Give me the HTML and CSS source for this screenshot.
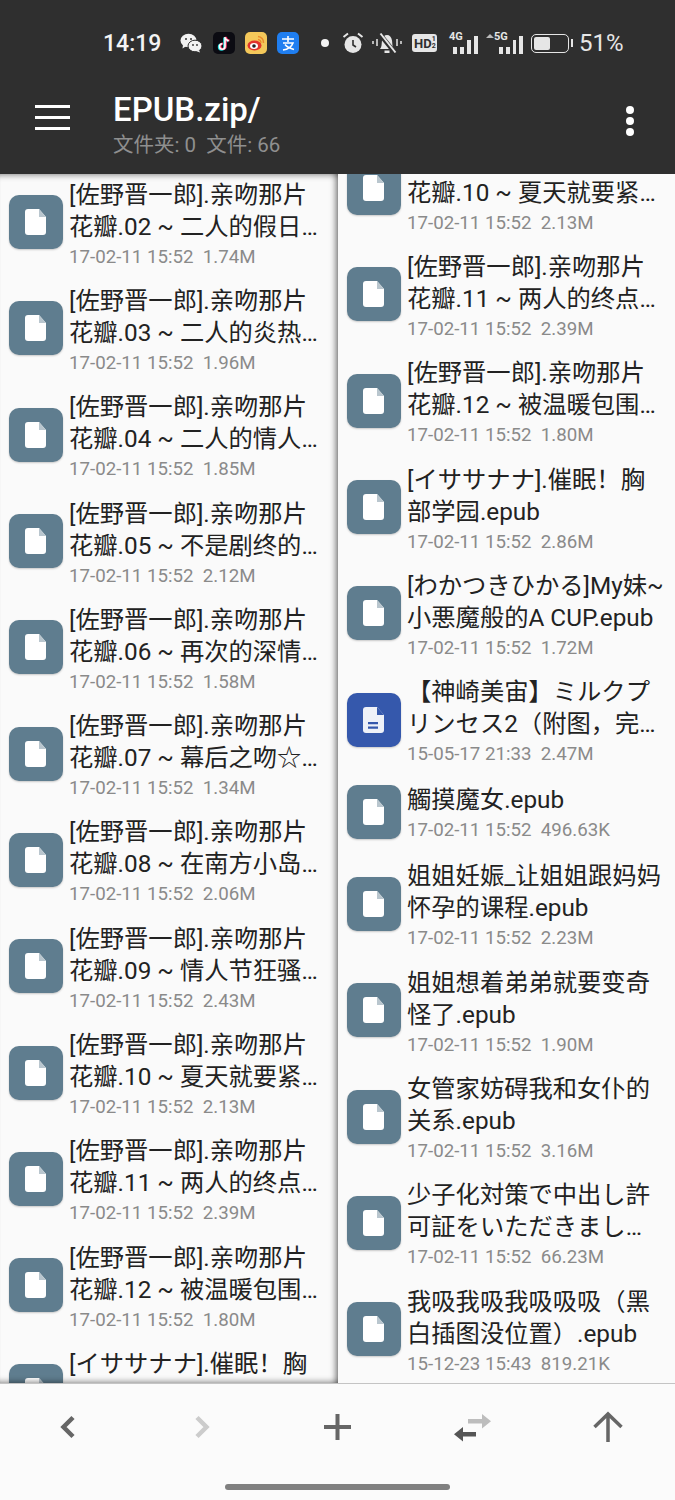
FILE: index.html
```html
<!DOCTYPE html>
<html lang="zh-CN">
<head>
    <meta charset="UTF-8">
    <meta name="viewport" content="width=device-width, initial-scale=1.0">
    <title>EPUB.zip</title>
    <link rel="stylesheet" href="styles.css">
</head>
<body>

    <!-- Shared file icons -->
    <svg class="sprites" width="0" height="0">
        <symbol id="file" viewBox="0 0 54 54">
            <path d="M19 14h11l7 8v15a3 3 0 0 1-3 3H19a3 3 0 0 1-3-3V17a3 3 0 0 1 3-3z" fill="#fff"/>
            <path d="M30 14l7 8h-7z" fill="#b9c6ce"/>
        </symbol>
        <symbol id="doc" viewBox="0 0 54 54">
            <path d="M19 14h11l7 8v15a3 3 0 0 1-3 3H19a3 3 0 0 1-3-3V17a3 3 0 0 1 3-3z" fill="#eef1f8"/>
            <path d="M30 14l7 8h-7z" fill="#3558ac"/>
            <path d="M21 29h10v2.200H21zM21 33.500h10v2.200H21z" fill="#3558ac"/>
        </symbol>
    </svg>

    <header class="app-header">
        <div class="status-bar">
            <span class="clock">14:19</span>
            <svg class="st-wechat" width="22" height="20" viewBox="0 0 22 20">
                <ellipse cx="8.500" cy="7.500" rx="8" ry="6.800" fill="#f2f2f2"/>
                <path d="M3 12l-.5 3.500 4-2.500z" fill="#f2f2f2"/>
                <ellipse cx="15" cy="13" rx="7" ry="5.800" fill="#f2f2f2" stroke="#2f2f2f"/>
                <path d="M19 17l1 2.500-4-1.500z" fill="#f2f2f2"/>
                <circle cx="6" cy="6" r="1" fill="#2f2f2f"/><circle cx="11" cy="6" r="1" fill="#2f2f2f"/>
                <circle cx="13" cy="12" r=".9" fill="#2f2f2f"/><circle cx="17" cy="12" r=".9" fill="#2f2f2f"/>
            </svg>
            <svg class="st-app" width="22" height="22" viewBox="0 0 22 22">
                <rect width="22" height="22" rx="5" fill="#0b0b12"/>
                <path d="M12 5v9.500a2.700 2.700 0 1 1-2.700-2.700M12 5c.3 2.200 1.700 3.500 3.800 3.700" fill="none" stroke="#25e0e0" stroke-width="2" transform="translate(-.8 .5)"/>
                <path d="M12 5v9.500a2.700 2.700 0 1 1-2.700-2.700M12 5c.3 2.200 1.700 3.500 3.800 3.700" fill="none" stroke="#f5305f" stroke-width="2" transform="translate(.8 -.2)"/>
                <path d="M12 5v9.500a2.700 2.700 0 1 1-2.700-2.700M12 5c.3 2.200 1.700 3.500 3.800 3.700" fill="none" stroke="#fff" stroke-width="1.600"/>
            </svg>
            <svg class="st-app" width="22" height="22" viewBox="0 0 22 22">
                <rect width="22" height="22" rx="5" fill="#f4c85a"/>
                <ellipse cx="9.500" cy="13.500" rx="7" ry="5" fill="#e2342c"/>
                <ellipse cx="9" cy="14" rx="4" ry="3" fill="#fff"/>
                <circle cx="9" cy="14" r="1.800" fill="#222"/>
                <path d="M13 4.500a6 6 0 0 1 5.500 6.500M13 7.500a3 3 0 0 1 2.800 3.300" fill="none" stroke="#ec8a2c" stroke-width="1.500"/>
            </svg>
            <svg class="st-app" width="22" height="22" viewBox="0 0 22 22">
                <rect width="22" height="22" rx="5" fill="#1f7ef0"/>
                <path d="M5 7h12M11 4v6M6 11h10c-1.500 4-5 6.500-10 7M8 12.500c2 2.500 5 4 9 5" fill="none" stroke="#fff" stroke-width="1.600"/>
            </svg>
            <span class="st-dot"></span>
            <svg class="st-alarm" width="22" height="22" viewBox="0 0 22 22">
                <circle cx="11" cy="12.500" r="8.500" fill="#e6e6e6"/>
                <path d="M11 8v5l3 2" fill="none" stroke="#2f2f2f" stroke-width="1.600"/>
                <path d="M1.500 5L6 1.500M20.500 5L16 1.500" stroke="#e6e6e6" stroke-width="2"/>
            </svg>
            <svg class="st-bell" width="30" height="22" viewBox="0 0 30 22">
                <path d="M8 17c2-2 1.500-5 2-8.500S12.500 3 15 3s4.500 2 5 5.500 0 6.500 2 8.500z" fill="#e6e6e6"/>
                <rect x="12.500" y="18.500" width="5" height="2.500" fill="#e6e6e6"/>
                <path d="M7 1l16 20" stroke="#2f2f2f" stroke-width="4.500"/>
                <path d="M8.500 1.500l15 19" stroke="#e6e6e6" stroke-width="2"/>
                <path d="M1 9v3M5 7v7M25 7v7M29 9v3" stroke="#e6e6e6" stroke-width="1.500"/>
            </svg>
            <span class="st-hd"><b>HD</b><i>1<br>2</i></span>
            <div class="st-signal st-4g">
                <span class="sig-label">4G</span>
                <span class="bar b1"></span><span class="bar b2"></span><span class="bar b3"></span><span class="bar b4"></span>
            </div>
            <div class="st-signal st-5g">
                <span class="sig-arrows"></span>
                <span class="sig-label">5G</span>
                <span class="bar b1"></span><span class="bar b2"></span><span class="bar b3"></span><span class="bar b4"></span>
            </div>
            <div class="st-battery"><span class="st-battery-fill"></span></div>
            <span class="st-percent">51%</span>
        </div>

        <div class="toolbar">
            <div class="menu-btn"><span></span><span></span><span></span></div>
            <div class="toolbar-title">
                <h1>EPUB.zip/</h1>
                <p>文件夹: 0&nbsp;&nbsp;文件: 66</p>
            </div>
            <div class="more-btn"><span></span><span></span><span></span></div>
        </div>
    </header>

    <main class="panes">
        <section class="pane pane-left">
            <ul class="file-list">
                <li class="file-row"><div class="file-icon"><svg><use href="#file"/></svg></div><div class="file-info"><div class="file-name">[佐野晋一郎].亲吻那片花瓣.02 ~ 二人的假日物语.epub</div><div class="file-meta">17-02-11 15:52&nbsp;&nbsp;1.74M</div></div></li>
                <li class="file-row"><div class="file-icon"><svg><use href="#file"/></svg></div><div class="file-info"><div class="file-name">[佐野晋一郎].亲吻那片花瓣.03 ~ 二人的炎热夏日.epub</div><div class="file-meta">17-02-11 15:52&nbsp;&nbsp;1.96M</div></div></li>
                <li class="file-row"><div class="file-icon"><svg><use href="#file"/></svg></div><div class="file-info"><div class="file-name">[佐野晋一郎].亲吻那片花瓣.04 ~ 二人的情人节物语.epub</div><div class="file-meta">17-02-11 15:52&nbsp;&nbsp;1.85M</div></div></li>
                <li class="file-row"><div class="file-icon"><svg><use href="#file"/></svg></div><div class="file-info"><div class="file-name">[佐野晋一郎].亲吻那片花瓣.05 ~ 不是剧终的剧终.epub</div><div class="file-meta">17-02-11 15:52&nbsp;&nbsp;2.12M</div></div></li>
                <li class="file-row"><div class="file-icon"><svg><use href="#file"/></svg></div><div class="file-info"><div class="file-name">[佐野晋一郎].亲吻那片花瓣.06 ~ 再次的深情一吻.epub</div><div class="file-meta">17-02-11 15:52&nbsp;&nbsp;1.58M</div></div></li>
                <li class="file-row"><div class="file-icon"><svg><use href="#file"/></svg></div><div class="file-info"><div class="file-name">[佐野晋一郎].亲吻那片花瓣.07 ~ 幕后之吻☆特别篇.epub</div><div class="file-meta">17-02-11 15:52&nbsp;&nbsp;1.34M</div></div></li>
                <li class="file-row"><div class="file-icon"><svg><use href="#file"/></svg></div><div class="file-info"><div class="file-name">[佐野晋一郎].亲吻那片花瓣.08 ~ 在南方小岛的假期.epub</div><div class="file-meta">17-02-11 15:52&nbsp;&nbsp;2.06M</div></div></li>
                <li class="file-row"><div class="file-icon"><svg><use href="#file"/></svg></div><div class="file-info"><div class="file-name">[佐野晋一郎].亲吻那片花瓣.09 ~ 情人节狂骚曲物语.epub</div><div class="file-meta">17-02-11 15:52&nbsp;&nbsp;2.43M</div></div></li>
                <li class="file-row"><div class="file-icon"><svg><use href="#file"/></svg></div><div class="file-info"><div class="file-name">[佐野晋一郎].亲吻那片花瓣.10 ~ 夏天就要紧紧相拥.epub</div><div class="file-meta">17-02-11 15:52&nbsp;&nbsp;2.13M</div></div></li>
                <li class="file-row"><div class="file-icon"><svg><use href="#file"/></svg></div><div class="file-info"><div class="file-name">[佐野晋一郎].亲吻那片花瓣.11 ~ 两人的终点站在前方.epub</div><div class="file-meta">17-02-11 15:52&nbsp;&nbsp;2.39M</div></div></li>
                <li class="file-row"><div class="file-icon"><svg><use href="#file"/></svg></div><div class="file-info"><div class="file-name">[佐野晋一郎].亲吻那片花瓣.12 ~ 被温暖包围的日子.epub</div><div class="file-meta">17-02-11 15:52&nbsp;&nbsp;1.80M</div></div></li>
                <li class="file-row"><div class="file-icon"><svg><use href="#file"/></svg></div><div class="file-info"><div class="file-name">[イササナナ].催眠！胸部学园.epub</div><div class="file-meta">17-02-11 15:52&nbsp;&nbsp;2.86M</div></div></li>
            </ul>
        </section>

        <section class="pane pane-right">
            <ul class="file-list">
                <li class="file-row"><div class="file-icon"><svg><use href="#file"/></svg></div><div class="file-info"><div class="file-name">[佐野晋一郎].亲吻那片花瓣.10 ~ 夏天就要紧紧相拥的日子.epub</div><div class="file-meta">17-02-11 15:52&nbsp;&nbsp;2.13M</div></div></li>
                <li class="file-row"><div class="file-icon"><svg><use href="#file"/></svg></div><div class="file-info"><div class="file-name">[佐野晋一郎].亲吻那片花瓣.11 ~ 两人的终点站在前方.epub</div><div class="file-meta">17-02-11 15:52&nbsp;&nbsp;2.39M</div></div></li>
                <li class="file-row"><div class="file-icon"><svg><use href="#file"/></svg></div><div class="file-info"><div class="file-name">[佐野晋一郎].亲吻那片花瓣.12 ~ 被温暖包围的日子里.epub</div><div class="file-meta">17-02-11 15:52&nbsp;&nbsp;1.80M</div></div></li>
                <li class="file-row"><div class="file-icon"><svg><use href="#file"/></svg></div><div class="file-info"><div class="file-name">[イササナナ].催眠！胸部学园.epub</div><div class="file-meta">17-02-11 15:52&nbsp;&nbsp;2.86M</div></div></li>
                <li class="file-row"><div class="file-icon"><svg><use href="#file"/></svg></div><div class="file-info"><div class="file-name">[わかつきひかる]My妹~小悪魔般的A CUP.epub</div><div class="file-meta">17-02-11 15:52&nbsp;&nbsp;1.72M</div></div></li>
                <li class="file-row"><div class="file-icon file-icon-doc"><svg><use href="#doc"/></svg></div><div class="file-info"><div class="file-name">【神崎美宙】ミルクプリンセス2（附图，完结篇）.txt</div><div class="file-meta">15-05-17 21:33&nbsp;&nbsp;2.47M</div></div></li>
                <li class="file-row file-row-single"><div class="file-icon"><svg><use href="#file"/></svg></div><div class="file-info"><div class="file-name">觸摸魔女.epub</div><div class="file-meta">17-02-11 15:52&nbsp;&nbsp;496.63K</div></div></li>
                <li class="file-row"><div class="file-icon"><svg><use href="#file"/></svg></div><div class="file-info"><div class="file-name">姐姐妊娠_让姐姐跟妈妈怀孕的课程.epub</div><div class="file-meta">17-02-11 15:52&nbsp;&nbsp;2.23M</div></div></li>
                <li class="file-row"><div class="file-icon"><svg><use href="#file"/></svg></div><div class="file-info"><div class="file-name">姐姐想着弟弟就要变奇怪了.epub</div><div class="file-meta">17-02-11 15:52&nbsp;&nbsp;1.90M</div></div></li>
                <li class="file-row"><div class="file-icon"><svg><use href="#file"/></svg></div><div class="file-info"><div class="file-name">女管家妨碍我和女仆的关系.epub</div><div class="file-meta">17-02-11 15:52&nbsp;&nbsp;3.16M</div></div></li>
                <li class="file-row"><div class="file-icon"><svg><use href="#file"/></svg></div><div class="file-info"><div class="file-name">少子化対策で中出し許可証をいただきました.epub</div><div class="file-meta">17-02-11 15:52&nbsp;&nbsp;66.23M</div></div></li>
                <li class="file-row"><div class="file-icon"><svg><use href="#file"/></svg></div><div class="file-info"><div class="file-name">我吸我吸我吸吸吸（黑白插图没位置）.epub</div><div class="file-meta">15-12-23 15:43&nbsp;&nbsp;819.21K</div></div></li>
            </ul>
        </section>
    </main>

    <footer class="bottom-bar">
        <div class="bottom-actions">
            <svg class="action" width="40" height="40" viewBox="0 0 40 40"><path d="M25 10.500L15.500 20l9.500 9.500" fill="none" stroke="#666" stroke-width="4.500"/></svg>
            <svg class="action" width="40" height="40" viewBox="0 0 40 40"><path d="M14 10.500l9.500 9.500-9.500 9.500" fill="none" stroke="#ccc" stroke-width="4.500"/></svg>
            <svg class="action" width="40" height="40" viewBox="0 0 40 40"><path d="M19.500 7v26M6 20h27" fill="none" stroke="#666" stroke-width="4"/></svg>
            <svg class="action" width="40" height="40" viewBox="0 0 40 40"><path d="M15 12h14v4.500H15zM29 7l9 7.200-9 7.300z" fill="#bdbdbd"/><path d="M10 25h13v4.500H10zM10 20v14.500l-9-7.200z" fill="#555"/></svg>
            <svg class="action" width="40" height="40" viewBox="0 0 40 40"><path d="M20 35V7M6.500 20L20 7l13.500 13" fill="none" stroke="#666" stroke-width="3.500"/></svg>
        </div>
        <div class="home-indicator"></div>
    </footer>

</body>
</html>
```

FILE: styles.css
```css
:root {
    --header-color: #2f2f2f;
    --pane-color: #fafafa;
    --title-color: #222222;
    --meta-color: #8a8a8a;
    --icon-color: #5f7d8f;
    --icon-doc-color: #3558ac;
    --status-color: #e6e6e6;
}

* {
    box-sizing: border-box;
}

html,
body {
    height: 100%;
}

body {
    margin: 0;
    height: 1500px;
    overflow: hidden;
    display: flex;
    flex-direction: column;
    background: var(--pane-color);
    font-family: Roboto, "Noto Sans CJK SC", sans-serif;
}

.sprites {
    position: absolute;
}

/* Header */
.app-header {
    flex: none;
    height: 174px;
    background: var(--header-color);
    color: #fff;
}

.status-bar {
    height: 86px;
    padding-left: 103px;
    display: flex;
    align-items: center;
    color: var(--status-color);
}

.clock {
    width: 58px;
    font-size: 23px;
    font-weight: 500;
    color: #f4f4f4;
}

.st-wechat {
    margin-left: 19px;
}

.st-app {
    margin-left: 10px;
}

.st-wechat + .st-app {
    margin-left: 11px;
}

.st-dot {
    width: 8px;
    height: 8px;
    margin-left: 22px;
    border-radius: 50%;
    background: #f4f4f4;
}

.st-alarm {
    margin-left: 13px;
}

.st-bell {
    margin-left: 8px;
}

.st-hd {
    width: 25px;
    height: 18px;
    margin-left: 10px;
    padding-left: 2px;
    display: flex;
    align-items: center;
    border-radius: 3px;
    background: var(--status-color);
    color: var(--header-color);
    font-size: 13px;
    line-height: 1;
}

.st-hd i {
    font-size: 7px;
    font-style: normal;
    font-weight: 700;
}

.st-signal {
    position: relative;
    height: 22px;
    margin-left: 12px;
    display: flex;
    align-items: flex-end;
    gap: 3px;
}

.st-4g {
    width: 29px;
    padding-left: 4px;
}

.st-5g {
    width: 38px;
    margin-left: 7px;
    padding-left: 14px;
}

.sig-label {
    position: absolute;
    top: -2px;
    left: 0;
    font-size: 11px;
    font-weight: 700;
}

.st-5g .sig-label {
    left: 9px;
}

.sig-arrows {
    position: absolute;
    top: 2px;
    left: 1px;
    width: 0;
    height: 0;
    border: 4px solid transparent;
    border-top: 0;
    border-bottom: 4px solid #bbbbbb;
}

.bar {
    width: 4px;
    background: var(--status-color);
}

.b1 { height: 7px; }
.b2 { height: 7px; }
.b3 { height: 14px; }
.b4 { height: 18px; }

.st-battery {
    position: relative;
    width: 38px;
    height: 19px;
    margin-left: 8px;
    padding: 2px;
    border: 1.500px solid var(--status-color);
    border-radius: 5px;
}

.st-battery::after {
    content: "";
    position: absolute;
    top: 4px;
    right: -5px;
    width: 2px;
    height: 8px;
    background: var(--status-color);
}

.st-battery-fill {
    display: block;
    width: 51%;
    height: 100%;
    border-radius: 2px;
    background: var(--status-color);
}

.st-percent {
    margin-left: 10px;
    font-size: 24px;
}

.toolbar {
    height: 88px;
    display: flex;
    align-items: flex-start;
}

.menu-btn {
    width: 35px;
    margin: 19px 0 0 35px;
    display: flex;
    flex-direction: column;
    gap: 8px;
}

.menu-btn span {
    height: 3px;
    background: #fff;
}

.toolbar-title {
    flex: 1;
    margin-left: 43px;
}

.toolbar-title h1 {
    margin: 4px 0 0;
    font-size: 33px;
    font-weight: 500;
    line-height: 40px;
}

.toolbar-title p {
    margin: 0;
    font-size: 20.500px;
    line-height: 30px;
    color: #8f8f8f;
}

.more-btn {
    margin: 20px 41px 0 0;
    display: flex;
    flex-direction: column;
    gap: 3px;
}

.more-btn span {
    width: 8px;
    height: 8px;
    border-radius: 50%;
    background: #fff;
}

/* File panes */
.panes {
    flex: 1;
    min-height: 0;
    display: flex;
}

.pane {
    position: relative;
    overflow: hidden;
    background: var(--pane-color);
}

.pane-left {
    width: 338px;
}

/* Shadow around the inactive pane */
.pane-left::after {
    content: "";
    position: absolute;
    inset: 0;
    box-shadow: inset 0 7px 6px -6px rgba(0, 0, 0, 0.45),
        inset 0 -7px 6px -6px rgba(0, 0, 0, 0.45),
        inset -7px 0 6px -5px rgba(0, 0, 0, 0.55);
}

.pane-right {
    flex: 1;
}

.file-list {
    margin: 0;
    padding: 0;
    list-style: none;
}

.pane-left .file-list {
    margin-top: -5px;
}

.pane-right .file-list {
    margin-top: -39px;
}

.file-row {
    height: 106.300px;
    padding: 0 9px;
    display: flex;
    align-items: center;
    gap: 6px;
}

.pane-left .file-row {
    padding-right: 12px;
}

.pane-right .file-row {
    padding-right: 10px;
}

.file-row-single {
    height: 78px;
}

.file-icon {
    flex: none;
    width: 54px;
    height: 54px;
    border-radius: 10px;
    background: var(--icon-color);
    box-shadow: 0 1px 2px rgba(0, 0, 0, 0.2);
}

.file-icon svg {
    display: block;
    width: 54px;
    height: 54px;
}

.file-icon-doc {
    background: var(--icon-doc-color);
}

.file-info {
    flex: 1;
    min-width: 0;
    padding-top: 5px;
}

.file-name {
    display: -webkit-box;
    -webkit-box-orient: vertical;
    -webkit-line-clamp: 2;
    overflow: hidden;
    font-size: 24.300px;
    line-height: 32px;
    color: var(--title-color);
}

.file-meta {
    font-size: 18.700px;
    line-height: 28px;
    color: var(--meta-color);
}

/* Bottom bar */
.bottom-bar {
    flex: none;
    height: 117px;
    border-top: 1px solid #c4c4c4;
    background: #fbfbfb;
}

.bottom-actions {
    display: grid;
    grid-template-columns: repeat(5, 1fr);
    justify-items: center;
    padding-top: 23px;
}

.action {
    display: block;
}

.home-indicator {
    width: 225px;
    height: 6px;
    margin: 37px auto 0;
    border-radius: 3px;
    background: #808080;
}
```
